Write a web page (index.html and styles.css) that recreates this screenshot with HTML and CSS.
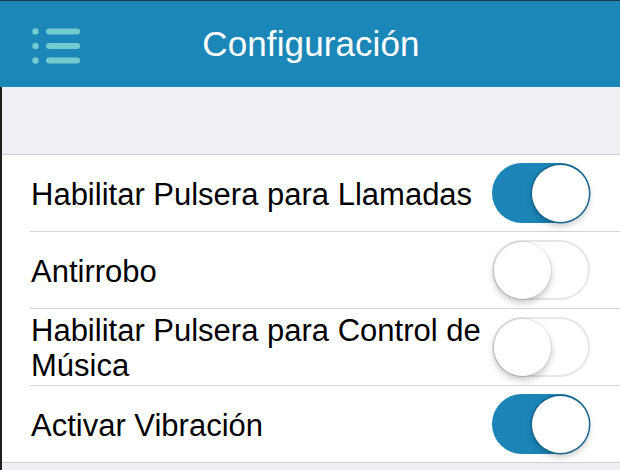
FILE: index.html
```html
<!DOCTYPE html>
<html lang="es">
<head>
<meta charset="utf-8">
<title>Configuración</title>
<link rel="stylesheet" href="styles.css">
</head>
<body>
<div class="screen">
  <header class="topbar">
    <div class="menu">
      <svg class="menu-icon" width="52" height="36" viewBox="0 0 52 36" aria-hidden="true">
        <circle cx="5.5" cy="3.5" r="3.2"/>
        <circle cx="5.5" cy="18" r="3.2"/>
        <circle cx="5.5" cy="32.5" r="3.2"/>
        <rect x="16" y="0.5" width="34" height="6" rx="3"/>
        <rect x="16" y="15" width="34" height="6" rx="3"/>
        <rect x="16" y="29.5" width="34" height="6" rx="3"/>
      </svg>
    </div>
    <h1 class="title">Configuración</h1>
    <div class="spacer-col"></div>
  </header>
  <main class="content">
    <div class="gap"></div>
    <ul class="list">
      <li class="row"><div class="row-inner"><span class="label">Habilitar Pulsera para Llamadas</span><span class="toggle on"><span class="knob"></span></span></div></li>
      <li class="row"><div class="row-inner"><span class="label">Antirrobo</span><span class="toggle"><span class="knob"></span></span></div></li>
      <li class="row"><div class="row-inner"><span class="label">Habilitar Pulsera para Control de Música</span><span class="toggle"><span class="knob"></span></span></div></li>
      <li class="row"><div class="row-inner"><span class="label">Activar Vibración</span><span class="toggle on"><span class="knob"></span></span></div></li>
    </ul>
  </main>
</div>
</body>
</html>
```
FILE: styles.css
```css
* { box-sizing: border-box; }
html, body { margin: 0; padding: 0; }
body {
  width: 620px;
  height: 470px;
  overflow: hidden;
  background: #efeff4;
  font-family: "Liberation Sans", Arial, sans-serif;
}
.screen {
  width: 620px;
  height: 470px;
  display: flex;
  flex-direction: column;
}
.topbar {
  height: 87px;
  flex: none;
  background: #1b86b8;
  border-top: 1px solid #1d3a47;
  display: grid;
  grid-template-columns: 1fr auto 1fr;
  align-items: center;
}
.menu {
  padding-left: 30px;
  padding-top: 3px;
  display: flex;
  align-items: center;
}
.menu-icon { fill: #74cbcf; display: block; }
.title {
  margin: 0;
  color: #ffffff;
  font-weight: normal;
  font-size: 35px;
  line-height: 40px;
  letter-spacing: 0.1px;
  padding-left: 2px;
}
.content {
  flex: 1;
  border-left: 2px solid #1f1f1f;
  background: #efeff4;
}
.gap { height: 67px; }
.list {
  list-style: none;
  margin: 0;
  padding: 0;
  background: #ffffff;
  border-top: 1px solid #cfcfd3;
  border-bottom: 1px solid #cfcfd3;
}
.row { padding-left: 28px; }
.row-inner {
  height: 77px;
  display: flex;
  align-items: center;
  padding-right: 30px;
  border-bottom: 1px solid #d4d4d8;
}
.row:last-child .row-inner { border-bottom: none; height: 76px; }
.label {
  flex: 1;
  padding-left: 1px;
  padding-right: 8px;
  padding-top: 2px;
  font-size: 31px;
  line-height: 35px;
  color: #000000;
}
.toggle {
  flex: none;
  width: 98px;
  height: 60px;
  border-radius: 30px;
  background: #ffffff;
  box-shadow: inset 0 0 0 2px #e6e6e8;
  display: flex;
  align-items: center;
  justify-content: flex-start;
  padding: 2px;
}
.toggle.on {
  background: #1b85b8;
  box-shadow: none;
  justify-content: flex-end;
  padding: 2px 1px 2px 2px;
}
.knob {
  width: 57px;
  height: 57px;
  border-radius: 50%;
  background: #ffffff;
  box-shadow: 0 0 0 1px rgba(0,0,0,0.08), 0 4px 7px rgba(0,0,0,0.22);
}
.toggle.on .knob {
  box-shadow: 0 0 0 1.5px #16668c, 0 4px 7px rgba(0,0,0,0.22);
}
```
